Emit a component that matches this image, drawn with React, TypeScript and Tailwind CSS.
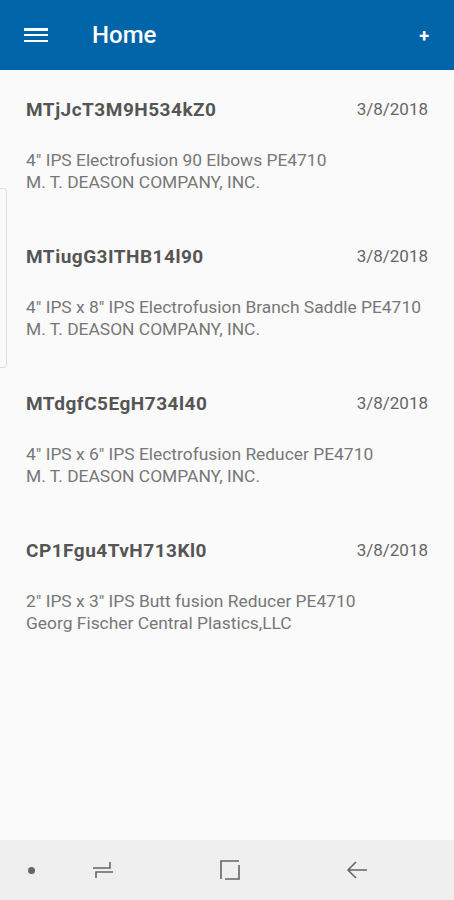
import React from "react";

const items = [
  {
    id: "MTjJcT3M9H534kZ0",
    date: "3/8/2018",
    desc: "4\" IPS Electrofusion 90 Elbows PE4710",
    company: "M. T. DEASON COMPANY, INC.",
  },
  {
    id: "MTiugG3ITHB14l90",
    date: "3/8/2018",
    desc: "4\" IPS x 8\" IPS Electrofusion Branch Saddle PE4710",
    company: "M. T. DEASON COMPANY, INC.",
  },
  {
    id: "MTdgfC5EgH734l40",
    date: "3/8/2018",
    desc: "4\" IPS x 6\" IPS Electrofusion Reducer PE4710",
    company: "M. T. DEASON COMPANY, INC.",
  },
  {
    id: "CP1Fgu4TvH713Kl0",
    date: "3/8/2018",
    desc: "2\" IPS x 3\" IPS Butt fusion Reducer PE4710",
    company: "Georg Fischer Central Plastics,LLC",
  },
];

export default function App() {
  return (
    <div
      className="relative flex h-[900px] w-[454px] flex-col overflow-hidden bg-[#fafafa]"
      style={{ fontFamily: "Roboto, 'Liberation Sans', sans-serif" }}
    >
      {/* top bar */}
      <header className="flex h-[70px] shrink-0 items-center bg-[#0065a8] text-white">
        <button className="ml-[24px] flex h-[14px] w-[24px] flex-col justify-between">
          <span className="h-[2.5px] w-full bg-white" />
          <span className="h-[2.5px] w-full bg-white" />
          <span className="h-[2.5px] w-full bg-white" />
        </button>
        <h1 className="ml-[44px] text-[24px] font-medium">Home</h1>
        <span className="ml-auto mr-[25px] text-[18px] font-bold">+</span>
      </header>

      {/* list */}
      <main className="flex-1">
        {items.map((item) => (
          <div key={item.id} className="px-[26px] pb-[24px] pt-[28px]">
            <div className="flex h-[24px] items-center justify-between">
              <span className="text-[19px] font-bold tracking-[0.5px] text-[#555555]">
                {item.id}
              </span>
              <span className="text-[17px] text-[#666666]">{item.date}</span>
            </div>
            <div className="mt-[27px] text-[17.4px] leading-[22px] text-[#777777]">
              <div>{item.desc}</div>
              <div>{item.company}</div>
            </div>
          </div>
        ))}
      </main>

      {/* edge handle */}
      <div className="absolute left-0 top-[188px] h-[180px] w-[7px] rounded-r-[4px] border border-l-0 border-[#dcdcdc]" />

      {/* system nav bar */}
      <nav className="flex h-[60px] shrink-0 items-center bg-[#efefef]">
        <span className="ml-[28px] h-[7px] w-[7px] rounded-full bg-[#666666]" />
        <svg className="ml-[57px]" width="22" height="22" viewBox="0 0 22 22" fill="none" stroke="#666" strokeWidth="1.6">
          <path d="M1 9h17V3M21 13H4v6" />
        </svg>
        <svg className="ml-[105px]" width="22" height="22" viewBox="0 0 22 22" fill="none" stroke="#666" strokeWidth="1.6">
          <path d="M2 20V2h18M20 6v14H6" />
        </svg>
        <svg className="ml-[105px]" width="22" height="22" viewBox="0 0 22 22" fill="none" stroke="#666" strokeWidth="1.6">
          <path d="M21 11H2M10 3l-8 8 8 8" />
        </svg>
      </nav>
    </div>
  );
}
